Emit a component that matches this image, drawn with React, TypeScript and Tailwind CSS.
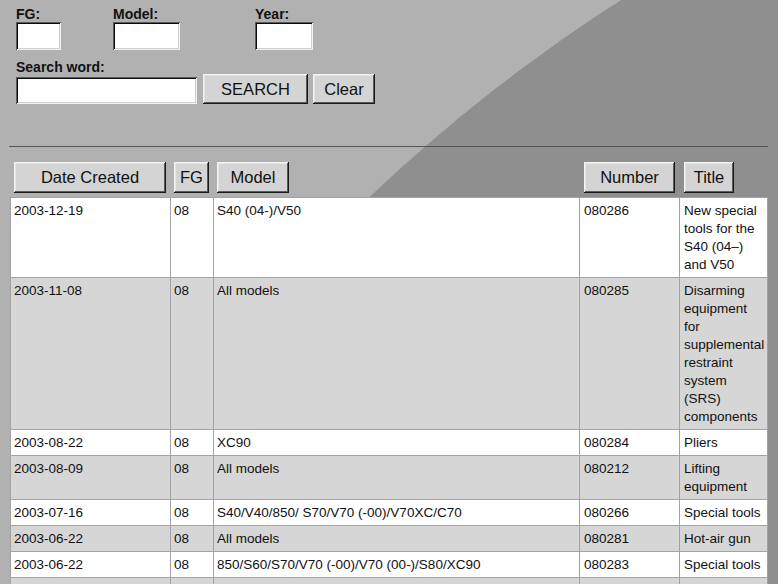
import React from "react";

type Row = {
  date: string;
  fg: string;
  model: string;
  number: string;
  title: string;
};

const rows: Row[] = [
  { date: "2003-12-19", fg: "08", model: "S40 (04-)/V50", number: "080286", title: "New special tools for the S40 (04–) and V50" },
  { date: "2003-11-08", fg: "08", model: "All models", number: "080285", title: "Disarming equipment for supplemental restraint system (SRS) components" },
  { date: "2003-08-22", fg: "08", model: "XC90", number: "080284", title: "Pliers" },
  { date: "2003-08-09", fg: "08", model: "All models", number: "080212", title: "Lifting equipment" },
  { date: "2003-07-16", fg: "08", model: "S40/V40/850/ S70/V70 (-00)/V70XC/C70", number: "080266", title: "Special tools" },
  { date: "2003-06-22", fg: "08", model: "All models", number: "080281", title: "Hot-air gun" },
  { date: "2003-06-22", fg: "08", model: "850/S60/S70/V70 (-00)/V70 (00-)/S80/XC90", number: "080283", title: "Special tools" },
  { date: "2003-06-10", fg: "08", model: "All models", number: "080279", title: "Special tools" },
];

const raised =
  "bg-[#d4d4d4] text-[#111] shadow-[inset_-1px_-1px_#1a1a1a,inset_1px_1px_#f4f4f4,inset_-2px_-2px_#5a5a5a,inset_2px_2px_#e4e4e4]";

const sunken =
  "bg-white shadow-[inset_1px_1px_#5a5a5a,inset_-1px_-1px_#f2f2f2,inset_2px_2px_#0a0a0a,inset_-2px_-2px_#d0d0d0]";

function Field({ label, width, col }: { label: string; width: string; col: string }) {
  return (
    <div className={col}>
      <div className="text-[14px] leading-[14px] font-bold text-[#111]">{label}</div>
      <div className={`mt-px h-[28px] ${width} ${sunken}`} />
    </div>
  );
}

function HeadButton({ label, width }: { label: string; width: string }) {
  return (
    <div className={`h-[31px] ${width} ${raised} flex items-center justify-center text-[16.5px] leading-none`}>
      {label}
    </div>
  );
}

const cols = "grid grid-cols-[159px_42px_365px_99px_87px] gap-px";

export default function App() {
  return (
    <div className="relative w-[778px] h-[584px] overflow-hidden bg-[#b1b1b1] font-['Liberation_Sans',Arial,sans-serif]">
      {/* large arc in the page background */}
      <div className="absolute left-[-145px] top-[-260px] w-[3315px] h-[3315px] rounded-full bg-[#8f8f8f]" />

      <div className="relative">
        {/* filter form */}
        <div className="pl-[16px] pt-[7px]">
          <div className="flex">
            <Field label="FG:" width="w-[45px]" col="w-[97px]" />
            <Field label="Model:" width="w-[67px]" col="w-[142px]" />
            <Field label="Year:" width="w-[58px]" col="w-[80px]" />
          </div>
          <div className="mt-[10px] text-[14px] leading-[14px] font-bold text-[#111]">Search word:</div>
          <div className="flex items-end">
            <div className={`h-[27px] w-[181px] ${sunken}`} />
            <div className={`ml-[6px] h-[30px] w-[105px] ${raised} flex items-center justify-center text-[16.5px] leading-none`}>
              SEARCH
            </div>
            <div className={`ml-[5px] h-[30px] w-[62px] ${raised} flex items-center justify-center text-[16.5px] leading-none`}>
              Clear
            </div>
          </div>
        </div>

        <div className="mt-[42px] ml-[9px] w-[759px] h-px bg-[#555]" />

        <div className={`${cols} mt-[15px] ml-[10px] px-px`}>
          <div className="pl-[3px]"><HeadButton label="Date Created" width="w-[152px]" /></div>
          <div className="pl-[3px]"><HeadButton label="FG" width="w-[35px]" /></div>
          <div className="pl-[3px]"><HeadButton label="Model" width="w-[72px]" /></div>
          <div className="pl-[4px]"><HeadButton label="Number" width="w-[91px]" /></div>
          <div className="pl-[4px]"><HeadButton label="Title" width="w-[50px]" /></div>
        </div>

        {/* result list */}
        <div className={`${cols} mt-[4px] ml-[10px] w-[758px] p-px bg-[#a3a3a3] text-[13.5px] leading-[18px] text-[#111]`}>
          {rows.map((r, i) => {
            const bg = i % 2 === 0 ? "bg-white" : "bg-[#d6d6d6]";
            const cell = `${bg} pt-[4px] pb-[3px] pl-[3px] pr-[3px]`;
            return (
              <React.Fragment key={i}>
                <div className={cell}>{r.date}</div>
                <div className={cell}>{r.fg}</div>
                <div className={cell}>{r.model}</div>
                <div className={`${cell} pl-[4px]`}>{r.number}</div>
                <div className={`${cell} pl-[4px]`}>{r.title}</div>
              </React.Fragment>
            );
          })}
        </div>
      </div>
    </div>
  );
}
